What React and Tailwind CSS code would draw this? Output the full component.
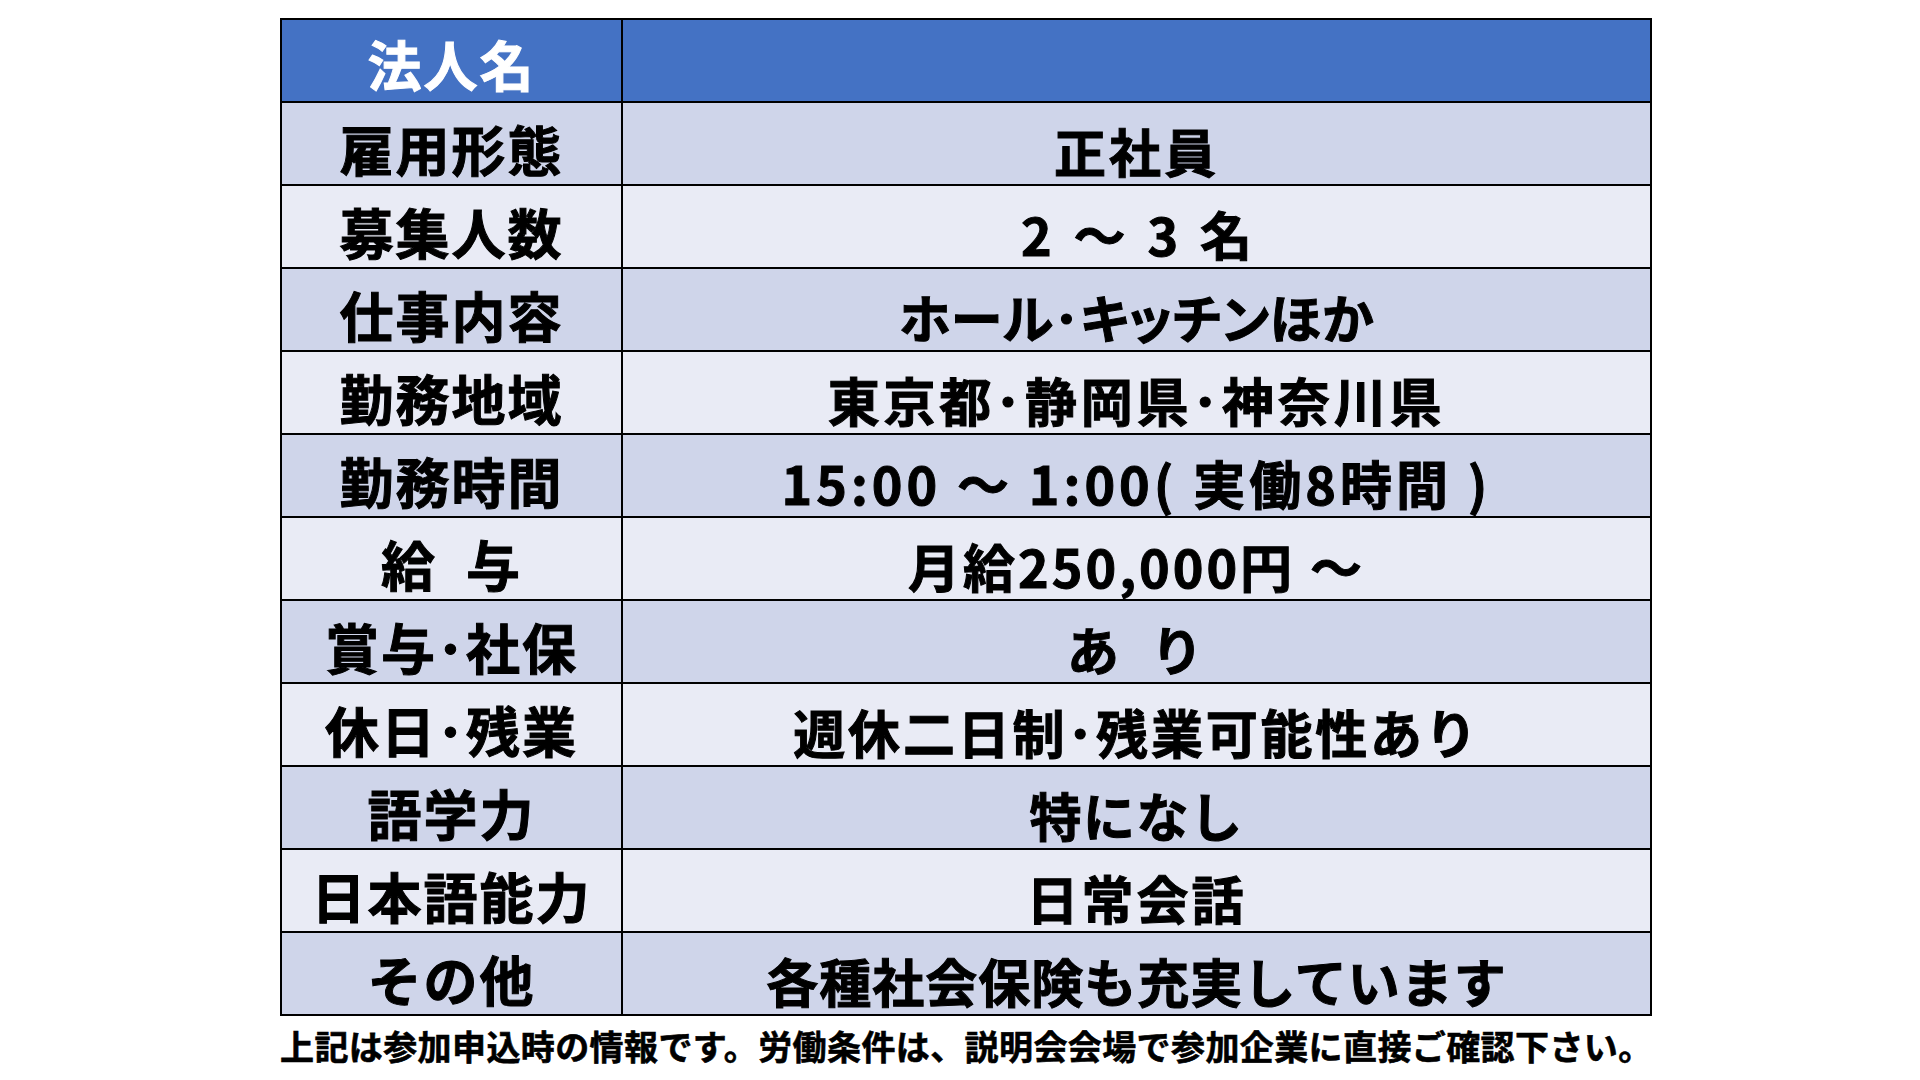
import React from "react";

const rows = [
  { label: "雇用形態", value: "正社員" },
  { label: "募集人数", value: "2 ～ 3 名", extra: "[word-spacing:10px]" },
  { label: "仕事内容", value: "ホール･キッチンほか", extra: "[font-feature-settings:'palt'] tracking-[0.5px]" },
  { label: "勤務地域", value: "東京都･静岡県･神奈川県", extra: "tracking-[3.8px]" },
  { label: "勤務時間", value: "15:00 ～ 1:00( 実働8時間 )", extra: "tracking-[4px]" },
  { label: "給\u2002与", value: "月給250,000円 ～" },
  { label: "賞与･社保", value: "あ\u2002り" },
  { label: "休日･残業", value: "週休二日制･残業可能性あり", extra: "tracking-[2.8px]" },
  { label: "語学力", value: "特になし", extra: "tracking-[1.5px]" },
  { label: "日本語能力", value: "日常会話" },
  { label: "その他", value: "各種社会保険も充実しています", extra: "tracking-[1px]" },
];

const font = "font-['Noto_Sans_CJK_JP','Noto_Sans',sans-serif]";

export default function App() {
  return (
    <div className={`w-[1920px] h-[1080px] bg-white pl-[280px] pt-[18px] ${font}`}>
      <table className="w-[1372px] border-collapse border-2 border-black table-fixed">
        <colgroup>
          <col className="w-[341px]" />
          <col />
        </colgroup>
        <tbody>
          <tr className="h-[83px] bg-[#4472c4]">
            <td className="border-2 border-black text-center align-middle pt-[6px] text-[54px] font-bold text-white leading-none tracking-[2px] [-webkit-text-stroke:1px_white]">
              法人名
            </td>
            <td className="border-2 border-black" />
          </tr>
          {rows.map((r, i) => (
            <tr key={r.label} className={`h-[83px] ${i % 2 === 0 ? "bg-[#cfd5ea]" : "bg-[#e9ebf5]"}`}>
              <td className="border-2 border-black text-center align-middle pt-[10px] text-[54px] font-bold text-black leading-none tracking-[2px] whitespace-nowrap [-webkit-text-stroke:1px_black]">
                {r.label}
              </td>
              <td
                className={`border-2 border-black text-center align-middle pt-[14px] text-[52px] font-bold text-black leading-none whitespace-nowrap [-webkit-text-stroke:1px_black] ${
                  r.extra || "tracking-[3px]"
                }`}
              >
                {r.value}
              </td>
            </tr>
          ))}
        </tbody>
      </table>
      <p className="mt-[13px] text-[34px] font-bold text-black leading-none whitespace-nowrap tracking-[0.4px] [-webkit-text-stroke:0.6px_black]">
        上記は参加申込時の情報です。労働条件は、説明会会場で参加企業に直接ご確認下さい。
      </p>
    </div>
  );
}
